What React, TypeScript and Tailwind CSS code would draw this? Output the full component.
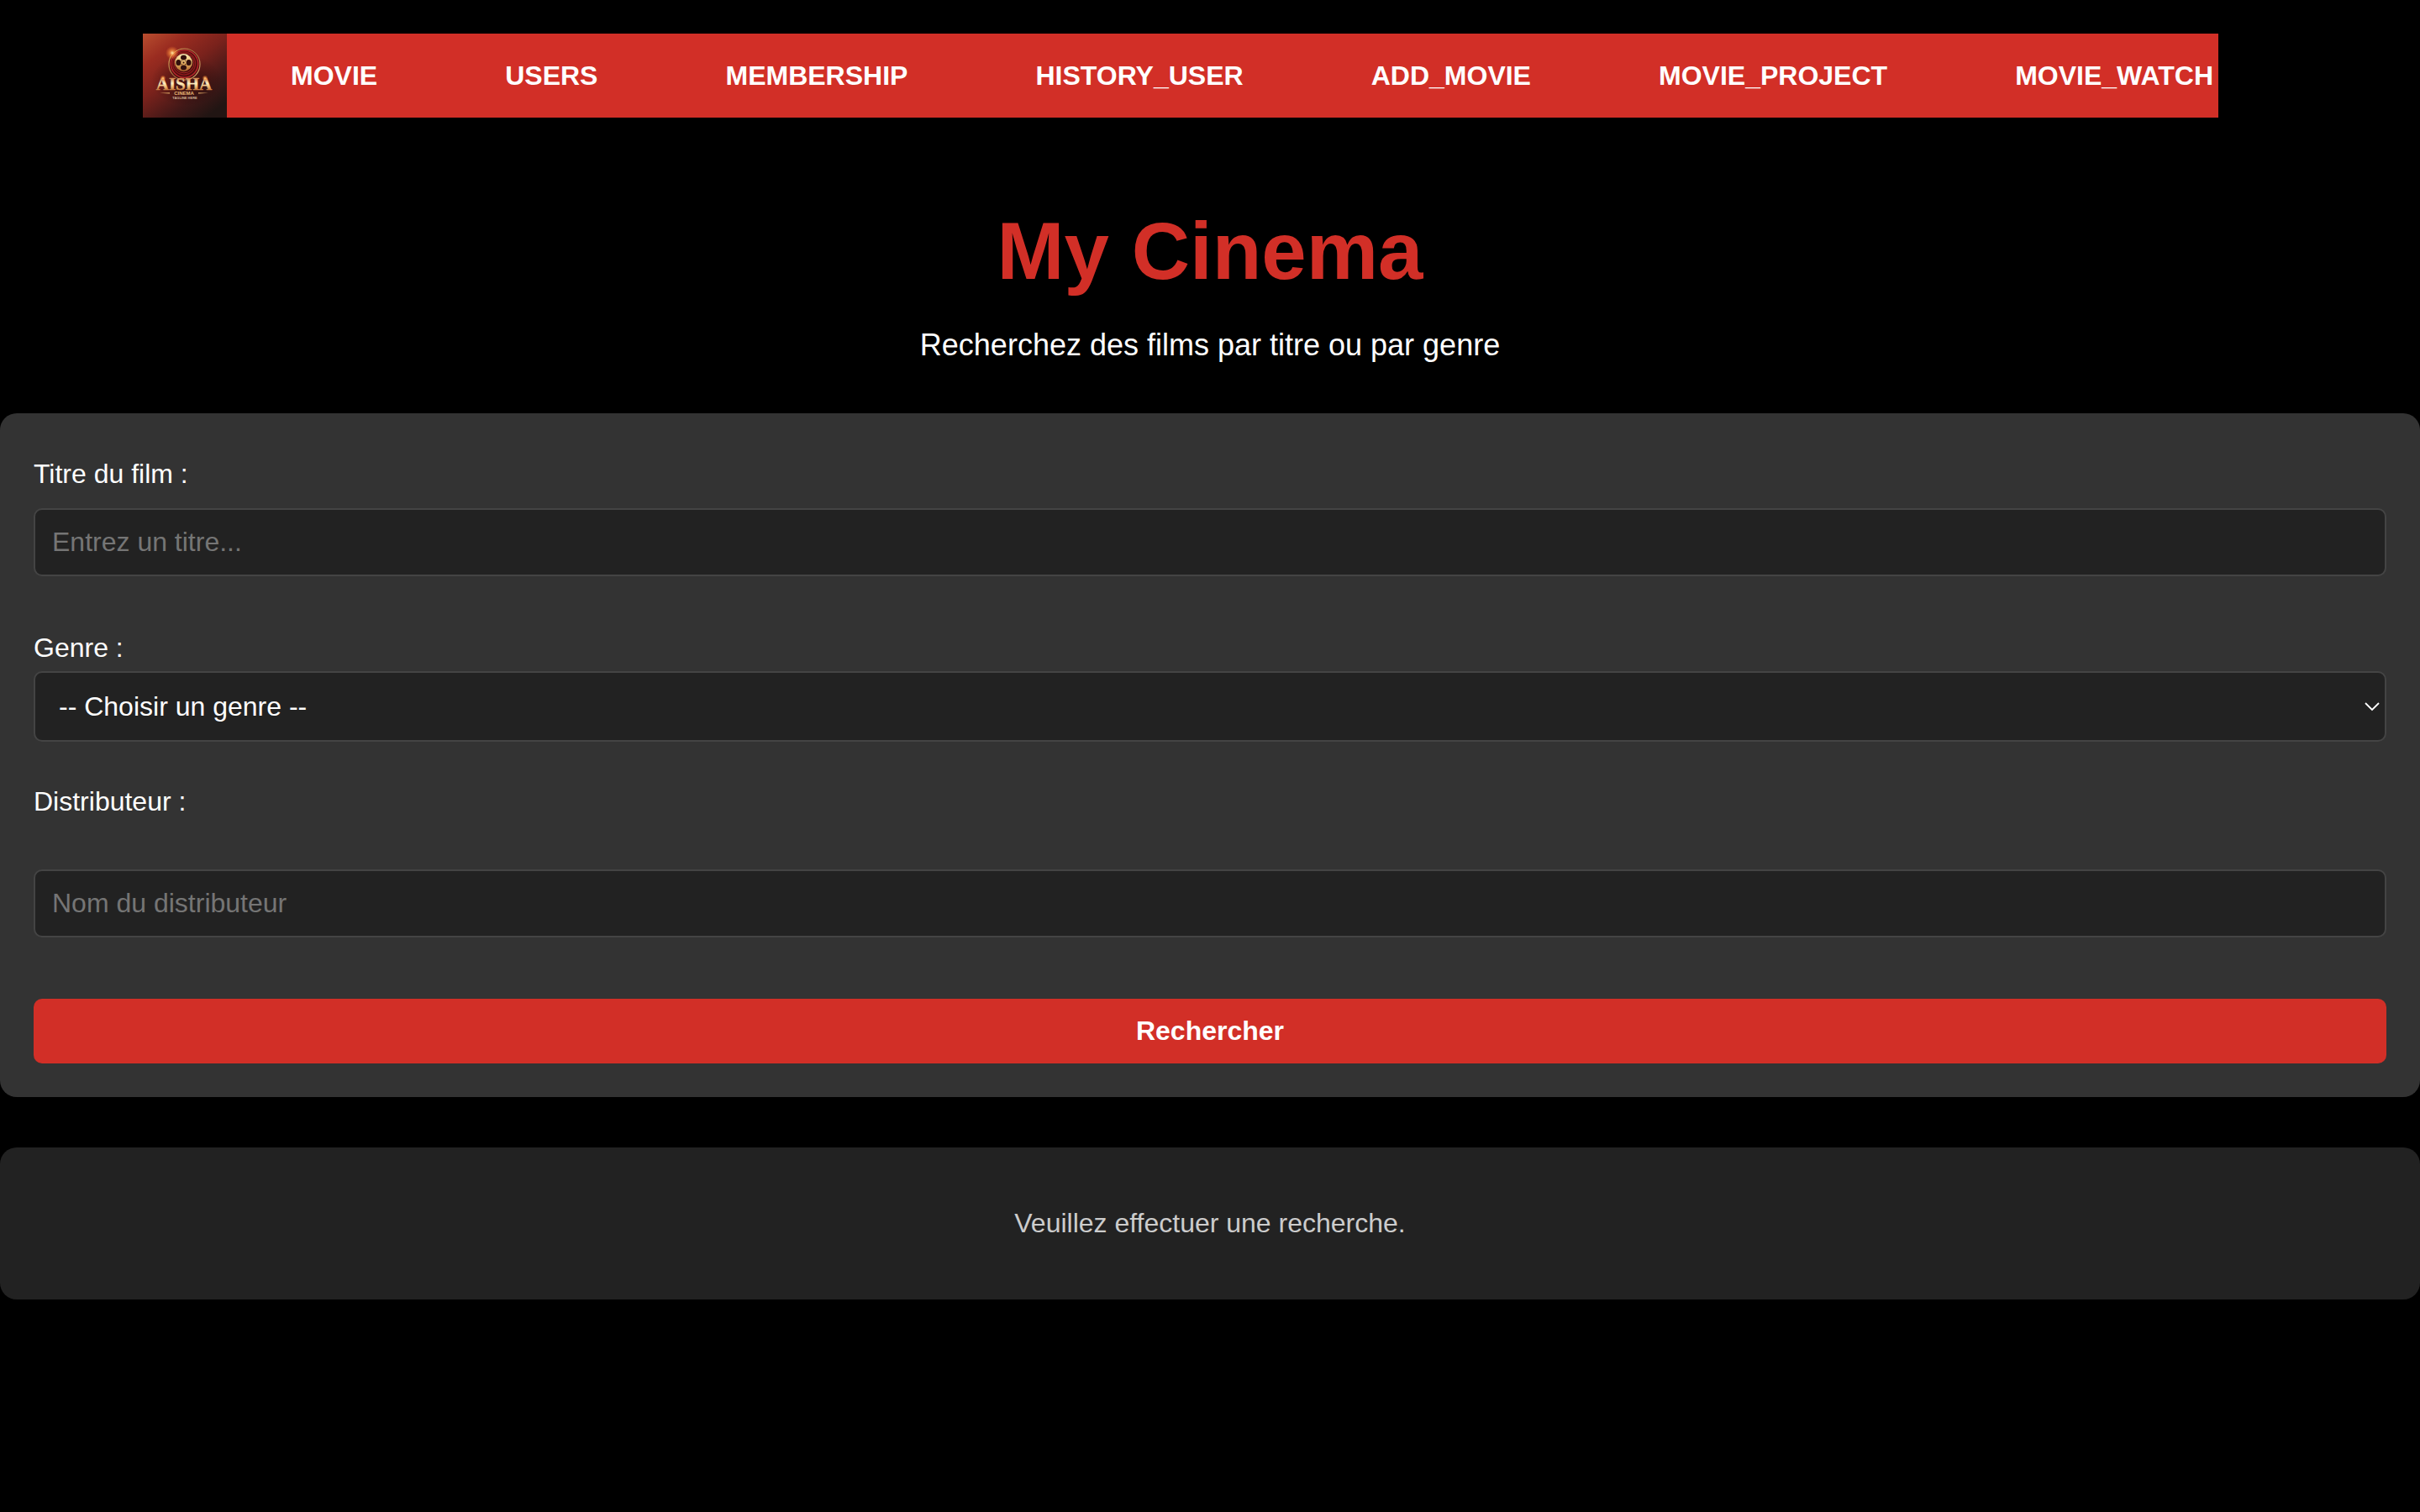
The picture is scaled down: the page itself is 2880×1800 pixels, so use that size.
import { useState } from 'react';
import type { FormEvent } from 'react';

const links = ['MOVIE', 'USERS', 'MEMBERSHIP', 'HISTORY_USER', 'ADD_MOVIE', 'MOVIE_PROJECT', 'MOVIE_WATCH'];

const field =
  'block w-full rounded-[10px] border-2 border-[#444] bg-[#222] text-[32px] text-white placeholder:text-[#757575] placeholder:opacity-100';

function Logo() {
  return (
    <svg viewBox="0 0 100 100" className="size-[100px] shrink-0" role="img" aria-label="Aisha Cinema">
      <defs>
        <linearGradient id="wall" x1="0" y1="0" x2="0.75" y2="1">
          <stop offset="0" stopColor="#b94e2f" />
          <stop offset="0.25" stopColor="#9a2c20" />
          <stop offset="0.5" stopColor="#7a221c" />
          <stop offset="0.78" stopColor="#421817" />
          <stop offset="1" stopColor="#211513" />
        </linearGradient>
        <linearGradient id="gold" x1="0" y1="0" x2="0" y2="1">
          <stop offset="0" stopColor="#fff0b8" />
          <stop offset="0.5" stopColor="#e5b264" />
          <stop offset="1" stopColor="#b0662c" />
        </linearGradient>
        <linearGradient id="letters" gradientUnits="userSpaceOnUse" x1="0" y1="52" x2="0" y2="68">
          <stop offset="0" stopColor="#c8743a" />
          <stop offset="0.45" stopColor="#fff0c4" />
          <stop offset="0.7" stopColor="#f0bc74" />
          <stop offset="1" stopColor="#b8642e" />
        </linearGradient>
        <linearGradient id="rim" x1="0" y1="0" x2="1" y2="1">
          <stop offset="0" stopColor="#ffc56e" />
          <stop offset="0.5" stopColor="#a0683c" />
          <stop offset="1" stopColor="#e2b878" />
        </linearGradient>
        <radialGradient id="glow">
          <stop offset="0" stopColor="#fff0b0" />
          <stop offset="0.35" stopColor="#ff9c45" stopOpacity="0.7" />
          <stop offset="1" stopColor="#ff7a30" stopOpacity="0" />
        </radialGradient>
        <radialGradient id="shade">
          <stop offset="0.3" stopColor="#1c0505" stopOpacity="0.4" />
          <stop offset="1" stopColor="#1c0505" stopOpacity="0" />
        </radialGradient>
      </defs>
      <rect width="100" height="100" fill="url(#wall)" />
      <ellipse cx="52" cy="56" rx="42" ry="30" fill="url(#shade)" />
      <circle cx="49.5" cy="36.5" r="18.5" fill="#4a0d0d" stroke="url(#rim)" strokeWidth="1.2" />
      <circle cx="49.5" cy="36" r="16.2" fill="none" stroke="#b3272a" strokeWidth="1.6" />
      <circle cx="49" cy="35.5" r="13.6" fill="none" stroke="#8e1a1c" strokeWidth="1.4" />
      <circle cx="49" cy="35" r="11.8" fill="none" stroke="#c4332f" strokeWidth="0.7" />
      <circle cx="48.5" cy="34.5" r="10.4" fill="url(#gold)" />
      <g fill="#32100d">
        <ellipse cx="48.5" cy="28.4" rx="3.5" ry="3" />
        <ellipse cx="48.5" cy="40.6" rx="3.5" ry="3" />
        <ellipse cx="42.4" cy="34.5" rx="3" ry="3.5" />
        <ellipse cx="54.6" cy="34.5" rx="3" ry="3.5" />
        <circle cx="48.5" cy="34.5" r="1" />
        <circle cx="46.3" cy="32.3" r="0.6" />
        <circle cx="50.7" cy="32.3" r="0.6" />
        <circle cx="46.3" cy="36.7" r="0.6" />
        <circle cx="50.7" cy="36.7" r="0.6" />
      </g>
      <circle cx="35" cy="23" r="8" fill="url(#glow)" />
      <g textAnchor="middle">
        <text x="49" y="67" fontFamily="Liberation Serif, serif" fontWeight="700" fontSize="21" fill="url(#letters)" stroke="url(#letters)" strokeWidth="0.4">AISHA</text>
        <text x="49" y="73" fontFamily="Liberation Sans, sans-serif" fontWeight="700" fontSize="6" fill="#e6b878">CINEMA</text>
        <text x="50" y="78" fontFamily="Liberation Sans, sans-serif" fontWeight="700" fontSize="4" fill="#d2b298">TAGLINE HERE</text>
      </g>
      <path d="M20 70.8 L32 70.2 V71.4 Z M78 70.8 L66 70.2 V71.4 Z" fill="#e0a866" />
      <circle cx="24" cy="53" r="3.5" fill="url(#glow)" />
      <circle cx="74" cy="53" r="3.5" fill="url(#glow)" />
    </svg>
  );
}

export default function App() {
  const [title, setTitle] = useState('');
  const [genre, setGenre] = useState('');
  const [distributor, setDistributor] = useState('');
  const onSubmit = (e: FormEvent) => e.preventDefault();

  return (
    <div className="min-h-screen bg-black pt-10 font-['Liberation_Sans',Arial,sans-serif] text-[32px] leading-9 text-white">
      <nav className="mr-[240px] ml-[170px] flex items-center bg-[#d22f27]">
        <Logo />
        <ul className="flex grow justify-between pr-[6px] pl-[76px] font-bold">
          {links.map((l) => (
            <li key={l}>
              <a href={`#${l.toLowerCase()}`}>{l}</a>
            </li>
          ))}
        </ul>
      </nav>

      <header className="pt-[104px] pb-[60px] text-center">
        <h1 className="text-[96px] leading-[110px] font-bold text-[#d22f27]">My Cinema</h1>
        <p className="mt-9 text-4xl leading-[42px]">Recherchez des films par titre ou par genre</p>
      </header>

      <main>
        <form onSubmit={onSubmit} className="rounded-[20px] bg-[#333] px-10 pt-[54px] pb-10">
          <label htmlFor="title" className="block">Titre du film :</label>
          <input
            id="title"
            type="text"
            placeholder="Entrez un titre..."
            value={title}
            onChange={(e) => setTitle(e.target.value)}
            className={`${field} mt-[23px] h-[81px] px-5`}
          />

          <label htmlFor="genre" className="mt-[67px] block">Genre :</label>
          <div className="relative mt-[10px]">
            <select
              id="genre"
              value={genre}
              onChange={(e) => setGenre(e.target.value)}
              className={`${field} h-[84px] appearance-none pr-12 pl-7`}
            >
              <option value="">-- Choisir un genre --</option>
              <option value="action">Action</option>
              <option value="comedy">Comédie</option>
              <option value="drama">Drame</option>
            </select>
            <svg
              viewBox="0 0 18 11"
              className="pointer-events-none absolute top-[37px] right-2 h-[11px] w-[18px]"
              fill="none"
              stroke="#fff"
              strokeWidth="1.8"
              aria-hidden="true"
            >
              <path d="M1 1 L9 9 L17 1" />
            </svg>
          </div>

          <label htmlFor="distributor" className="mt-[53px] block">Distributeur :</label>
          <input
            id="distributor"
            type="text"
            placeholder="Nom du distributeur"
            value={distributor}
            onChange={(e) => setDistributor(e.target.value)}
            className={`${field} mt-[63px] h-[81px] px-5`}
          />

          <button type="submit" className="mt-[73px] block h-[77px] w-full rounded-[10px] bg-[#d22f27] pb-[2px] font-bold">
            Rechercher
          </button>
        </form>

        <section className="mt-[60px] rounded-[20px] bg-[#222] pt-[72px] pb-[73px] text-center text-[#ccc]">
          <p>Veuillez effectuer une recherche.</p>
        </section>
      </main>
    </div>
  );
}
